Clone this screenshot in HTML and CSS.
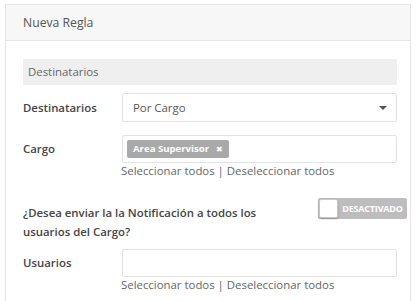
FILE: index.html
```html
<!DOCTYPE html>
<html>
<head>
<meta charset="utf-8">
<link rel="stylesheet" href="styles.css">
</head>
<body>
<div class="card">
  <div class="card-header">Nueva Regla</div>
  <div class="card-body">
    <div class="section">Destinatarios</div>
    <div class="row row-dest">
      <label class="label">Destinatarios</label>
      <div class="field">
        <div class="control select">
          <span>Por Cargo</span>
          <span class="caret"></span>
        </div>
      </div>
    </div>
    <div class="row row-cargo">
      <label class="label">Cargo</label>
      <div class="field">
        <div class="control multi">
          <span class="tag">Area Supervisor <b class="x">✖</b></span>
        </div>
        <div class="links">Seleccionar todos | Deseleccionar todos</div>
      </div>
    </div>
    <div class="row row-question">
      <div class="question">¿Desea enviar la la Notificación a todos los usuarios del Cargo?</div>
      <div class="toggle"><span class="knob"></span><span class="toggle-text">DESACTIVADO</span></div>
    </div>
    <div class="row row-users">
      <label class="label">Usuarios</label>
      <div class="field">
        <div class="control multi empty"></div>
        <div class="links">Seleccionar todos | Deseleccionar todos</div>
      </div>
    </div>
  </div>
</div>
</body>
</html>
```
FILE: styles.css
```css
* { box-sizing: border-box; }
html, body { margin: 0; padding: 0; background: #fff; }
body {
  font-family: "Open Sans", "DejaVu Sans", sans-serif;
  font-size: 11.4px;
  color: #555;
  overflow: hidden;
  height: 301px;
}
.card {
  margin: 4px 6px 0 5px;
  border: 1px solid #e6e6e6;
  border-bottom: none;
  height: 297px;
}
.card-header {
  height: 36px;
  background: #f7f7f7;
  border-bottom: 1px solid #e6e6e6;
  padding-left: 17px;
  font-size: 12.2px;
  line-height: 35px;
  color: #555;
}
.card-body {
  padding: 18px 13px 0 17px;
}
.section {
  height: 26px;
  background: #efefef;
  padding-left: 5px;
  line-height: 26px;
  color: #666;
}
.row {
  display: flex;
  align-items: flex-start;
}
.label {
  width: 99px;
  flex: none;
  font-weight: 600;
  color: #444;
}
.field { flex: 1; }
.control {
  border: 1px solid #e2e2e2;
  border-radius: 2px;
  background: #fff;
}
.row-dest { margin-top: 8px; }
.row-dest .label { line-height: 29px; }
.select {
  height: 29px;
  display: flex;
  align-items: center;
  justify-content: space-between;
  padding: 0 9px 0 10px;
  color: #555;
}
.caret {
  width: 0; height: 0;
  border-left: 4px solid transparent;
  border-right: 4px solid transparent;
  border-top: 4px solid #555;
}
.row-cargo { margin-top: 13px; }
.row-cargo .label { line-height: 28px; }
.multi {
  height: 28px;
  padding: 3px 4px;
  display: flex;
  align-items: center;
}
.tag {
  background: #a9a9a9;
  color: #fff;
  font-size: 9.6px;
  font-weight: 700;
  height: 18px;
  line-height: 18px;
  padding: 0 6px 0 6px;
  border-radius: 2px;
  display: flex;
  align-items: center;
}
.tag .x { margin-left: 7px; font-size: 8px; }
.links {
  color: #666;
  line-height: 15px;
  margin-top: 0;
  margin-left: -1px;
}
.row-question {
  margin-top: 20px;
  justify-content: space-between;
}
.question {
  width: 250px;
  line-height: 19px;
  color: #444;
  font-weight: 600;
  margin-top: 5px;
}
.toggle {
  width: 89px;
  height: 21px;
  background: #bdbdbd;
  border-radius: 2px;
  display: flex;
  align-items: center;
  margin-right: -10px;
}
.knob {
  width: 19px;
  height: 19px;
  margin-left: 1px;
  background: #fff;
  border: 1px solid #c8c8c8;
  border-radius: 2px;
  box-shadow: 0 1px 2px rgba(0,0,0,0.25);
}
.toggle-text {
  flex: 1;
  text-align: center;
  color: #fff;
  font-size: 9px;
  font-weight: 700;
  letter-spacing: -0.2px;
}
.row-users { margin-top: 8px; }
.row-users .label { line-height: 28px; }
.empty { height: 28px; }
```
